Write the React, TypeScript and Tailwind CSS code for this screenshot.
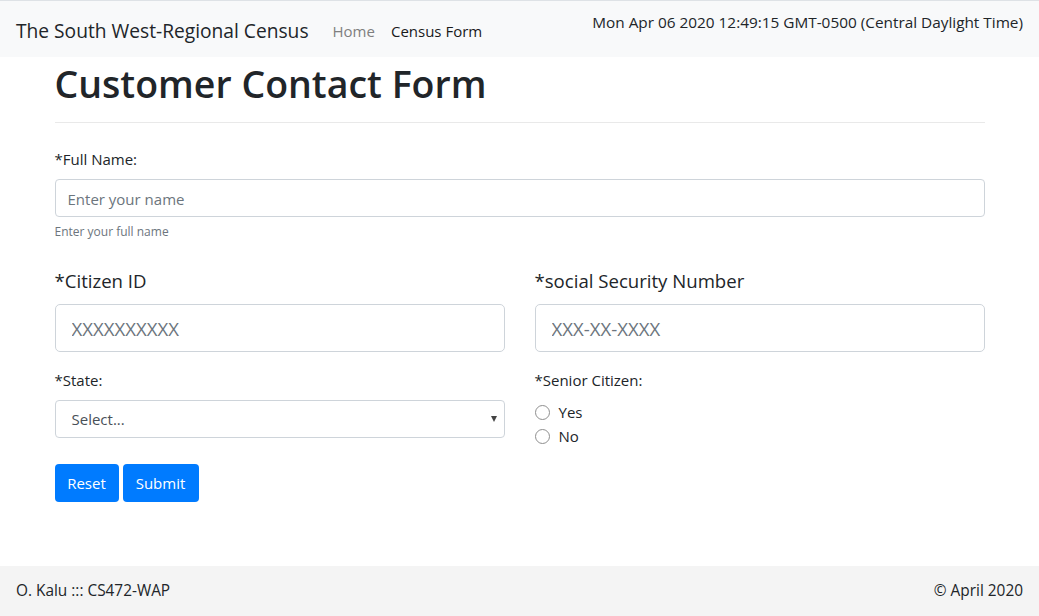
import { useState } from 'react'

const FONT = { fontFamily: '"Open Sans", "Noto Sans", sans-serif' }

function Navbar() {
  return (
    <nav className="flex h-[57px] items-start border-t border-[#dee2e6] bg-[#f8f9fa] px-4">
      <span className="mt-[16px] text-[19.2px] leading-[28px] text-[#212529]">The South West-Regional Census</span>
      <div className="ml-[24px] mt-[18px] flex gap-[16px] text-[15px] leading-6">
        <a className="text-[#7f7f7f]">Home</a>
        <a className="text-[#1a1a1a]">Census Form</a>
      </div>
      <span className="ml-auto mt-[9px] text-[15.35px] leading-6 text-[#212529]">
        Mon Apr 06 2020 12:49:15 GMT-0500 (Central Daylight Time)
      </span>
    </nav>
  )
}

function Radio({ label, name, checked, onChange }: { label: string; name: string; checked: boolean; onChange: () => void }) {
  return (
    <label className="flex h-6 items-center gap-[9px] text-[15px] text-[#212529]">
      <input
        type="radio"
        name={name}
        checked={checked}
        onChange={onChange}
        className="m-0 h-[15px] w-[15px] appearance-none rounded-full border border-[#8f8f8f] bg-white"
      />
      {label}
    </label>
  )
}

export default function App() {
  const [senior, setSenior] = useState<'yes' | 'no' | null>(null)

  return (
    <div className="flex min-h-[616px] flex-col bg-white" style={FONT}>
      <Navbar />
      <main className="mx-auto w-[930px] flex-1">
        <h1 className="mt-[1px] text-[37.5px] font-semibold leading-[52px] text-[#212529]">Customer Contact Form</h1>
        <hr className="mt-[12px] border-[#e9e9e9]" />

        <div className="mt-[24px]">
          <label className="block text-[15px] leading-6 text-[#212529]">*Full Name:</label>
          <input
            className="mt-[8px] block h-[38px] w-full rounded-[4px] border border-[#ced4da] px-[12px] pt-[2px] text-[15px] text-[#495057] placeholder:text-[#6c757d]"
            placeholder="Enter your name"
          />
          <small className="mt-[6px] block text-[12px] leading-[18px] text-[#6c757d]">Enter your full name</small>
        </div>

        <div className="mt-[26px] grid grid-cols-2 gap-x-[30px]">
          <div>
            <label className="block text-[18.6px] leading-[28px] text-[#212529]">*Citizen ID</label>
            <input
              className="mt-[9px] block h-[48px] w-full rounded-[5px] border border-[#ced4da] px-[16px] text-[18.6px] placeholder:text-[#6c757d]"
              placeholder="XXXXXXXXXX"
            />
          </div>
          <div>
            <label className="block text-[18.6px] leading-[28px] text-[#212529]">*social Security Number</label>
            <input
              className="mt-[9px] block h-[48px] w-full rounded-[5px] border border-[#ced4da] px-[16px] text-[18.6px] placeholder:text-[#6c757d]"
              placeholder="XXX-XX-XXXX"
            />
          </div>

          <div className="mt-[16px]">
            <label className="block text-[15px] leading-6 text-[#212529]">*State:</label>
            <div className="relative mt-[8px] flex h-[38px] items-center rounded-[4px] border border-[#ced4da] px-[16px] text-[15px] text-[#495057]">
              Select...
              <span className="absolute right-[7px] top-[15px] h-0 w-0 border-x-[3.5px] border-t-[6px] border-x-transparent border-t-[#444]" />
            </div>
          </div>
          <div className="mt-[16px]">
            <label className="block text-[15px] leading-6 text-[#212529]">*Senior Citizen:</label>
            <div className="mt-[8px] flex flex-col">
              <Radio label="Yes" name="senior" checked={senior === 'yes'} onChange={() => setSenior('yes')} />
              <Radio label="No" name="senior" checked={senior === 'no'} onChange={() => setSenior('no')} />
            </div>
          </div>
        </div>

        <div className="mt-[16px] flex gap-[4px]">
          <button type="button" className="h-[38px] w-[64px] rounded-[4px] bg-[#007bff] text-[15px] text-white">
            Reset
          </button>
          <button type="button" className="h-[38px] w-[76px] rounded-[4px] bg-[#007bff] text-[15px] text-white">
            Submit
          </button>
        </div>
      </main>
      <footer className="flex h-[50px] items-center justify-between bg-[#f4f4f4] px-4 text-[15.4px] text-[#212529]">
        <span>O. Kalu ::: CS472-WAP</span>
        <span>© April 2020</span>
      </footer>
    </div>
  )
}
